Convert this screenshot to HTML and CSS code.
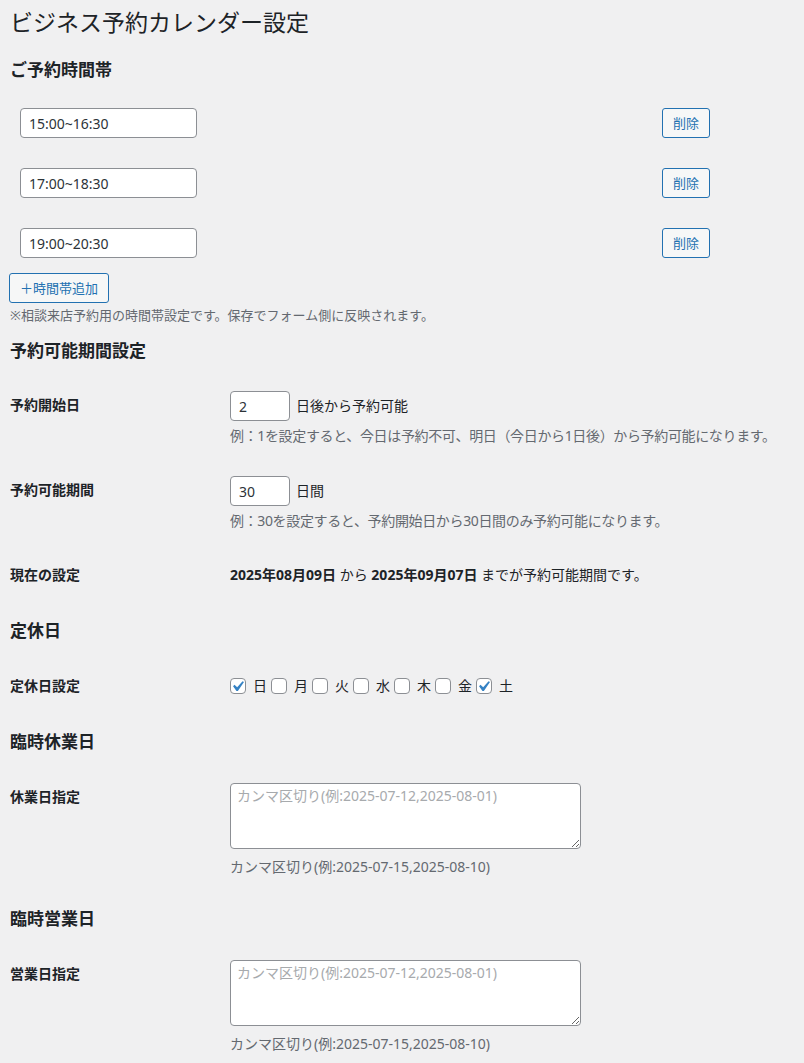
FILE: index.html
```html
<!DOCTYPE html>
<html lang="ja">
<head>
<meta charset="utf-8">
<title>ビジネス予約カレンダー設定</title>
<link rel="stylesheet" href="styles.css">
</head>
<body>
<div class="wrap">
  <h1 class="page-title">ビジネス予約カレンダー設定</h1>

  <h2 class="section first">ご予約時間帯</h2>
  <div class="slots">
    <div class="slot-row">
      <div class="slot-main"><input class="text-input slot-input" type="text" value="15:00~16:30"></div>
      <div class="slot-action"><button class="button" type="button">削除</button></div>
    </div>
    <div class="slot-row">
      <div class="slot-main"><input class="text-input slot-input" type="text" value="17:00~18:30"></div>
      <div class="slot-action"><button class="button" type="button">削除</button></div>
    </div>
    <div class="slot-row">
      <div class="slot-main"><input class="text-input slot-input" type="text" value="19:00~20:30"></div>
      <div class="slot-action"><button class="button" type="button">削除</button></div>
    </div>
  </div>
  <button class="button add-button" type="button">＋時間帯追加</button>
  <p class="note">※相談来店予約用の時間帯設定です。保存でフォーム側に反映されます。</p>

  <h2 class="section">予約可能期間設定</h2>
  <div class="form-table">
    <div class="form-row">
      <div class="th">予約開始日</div>
      <div class="td">
        <div class="inline"><input class="text-input small-input" type="text" value="2"><span>日後から予約可能</span></div>
        <p class="description">例：1を設定すると、今日は予約不可、明日（今日から1日後）から予約可能になります。</p>
      </div>
    </div>
    <div class="form-row">
      <div class="th">予約可能期間</div>
      <div class="td">
        <div class="inline"><input class="text-input small-input" type="text" value="30"><span>日間</span></div>
        <p class="description">例：30を設定すると、予約開始日から30日間のみ予約可能になります。</p>
      </div>
    </div>
    <div class="form-row">
      <div class="th">現在の設定</div>
      <div class="td td-text"><strong>2025年08月09日</strong> から <strong>2025年09月07日</strong> までが予約可能期間です。</div>
    </div>
  </div>

  <h2 class="section">定休日</h2>
  <div class="form-table">
    <div class="form-row">
      <div class="th">定休日設定</div>
      <div class="td td-text">
        <div class="days">
          <label class="day"><span class="cb checked"><svg viewBox="0 0 20 20" width="21" height="21"><path d="M14.83 4.89l1.34.94-5.81 8.38H9.02L5.78 9.67l1.34-1.25 2.570 2.4z" fill="#3582c4"/></svg></span>日</label>
          <label class="day"><span class="cb"></span>月</label>
          <label class="day"><span class="cb"></span>火</label>
          <label class="day"><span class="cb"></span>水</label>
          <label class="day"><span class="cb"></span>木</label>
          <label class="day"><span class="cb"></span>金</label>
          <label class="day"><span class="cb checked"><svg viewBox="0 0 20 20" width="21" height="21"><path d="M14.83 4.89l1.34.94-5.81 8.38H9.02L5.78 9.67l1.34-1.25 2.570 2.4z" fill="#3582c4"/></svg></span>土</label>
        </div>
      </div>
    </div>
  </div>

  <h2 class="section">臨時休業日</h2>
  <div class="form-table">
    <div class="form-row">
      <div class="th">休業日指定</div>
      <div class="td">
        <textarea class="textarea" placeholder="カンマ区切り(例:2025-07-12,2025-08-01)"></textarea>
        <p class="description tight">カンマ区切り(例:2025-07-15,2025-08-10)</p>
      </div>
    </div>
  </div>

  <h2 class="section">臨時営業日</h2>
  <div class="form-table">
    <div class="form-row">
      <div class="th">営業日指定</div>
      <div class="td">
        <textarea class="textarea" placeholder="カンマ区切り(例:2025-07-12,2025-08-01)"></textarea>
        <p class="description tight">カンマ区切り(例:2025-07-15,2025-08-10)</p>
      </div>
    </div>
  </div>
</div>
</body>
</html>
```

FILE: styles.css
```css
* { box-sizing: border-box; }

html, body {
  margin: 0;
  background: #f0f0f1;
}

body {
  font-family: "Noto Sans", "Noto Sans CJK JP", sans-serif;
  font-size: 14px;
  line-height: 1.4;
  color: #1d2327;
}

.wrap {
  padding: 0 10px;
}

.page-title {
  margin: 0;
  padding-top: 7px;
  font-size: 23px;
  font-weight: 400;
  line-height: 30px;
  color: #1d2327;
}

.section {
  margin: 15px 0 14px;
  font-size: 17px;
  font-weight: 700;
  line-height: 24px;
  color: #1d2327;
}

.section.first {
  margin-top: 21px;
  margin-bottom: 11px;
}

.slot-row {
  display: flex;
  align-items: center;
  padding: 15px 10px;
}

.slot-main {
  width: 632px;
}

.slot-action {
  padding-left: 10px;
}

.text-input {
  display: block;
  height: 30px;
  padding: 0 8px;
  border: 1px solid #8c8f94;
  border-radius: 4px;
  background: #fff;
  font-family: inherit;
  font-size: 14px;
  color: #2c3338;
  outline: none;
}

.slot-input {
  width: 177px;
}

.small-input {
  width: 60px;
}

.button {
  display: inline-block;
  height: 30px;
  padding: 0 10px;
  border: 1px solid #2271b1;
  border-radius: 3px;
  background: #f6f7f7;
  color: #2271b1;
  font-family: inherit;
  font-size: 13px;
  line-height: 28px;
  cursor: pointer;
}

.add-button {
  display: block;
  margin-left: -1px;
}

.note {
  margin: 4px 0 0;
  font-size: 13px;
  line-height: 16px;
  color: #646970;
}

.note + .section {
  margin-top: 16px;
  margin-bottom: 13px;
}

.form-row {
  display: flex;
  align-items: flex-start;
}

.th {
  width: 210px;
  flex: none;
  padding: 20px 10px 20px 0;
  font-weight: 700;
  line-height: 18px;
}

.td {
  flex: 1;
  min-width: 0;
  padding: 15px 10px;
  line-height: 18px;
}

.td-text {
  padding-top: 20px;
}

.inline {
  display: flex;
  align-items: center;
  gap: 6px;
}

.description {
  margin: 4px 0 0;
  line-height: 21px;
  color: #646970;
  white-space: nowrap;
  letter-spacing: -0.35px;
}

.description.tight {
  margin-top: 7px;
  letter-spacing: 0;
}

.days {
  display: flex;
  align-items: center;
}

.day {
  display: inline-flex;
  align-items: center;
  margin-right: 4px;
  line-height: 18px;
  color: #1d2327;
}

.cb {
  display: block;
  width: 16px;
  height: 16px;
  margin-right: 7px;
  border: 1px solid #8c8f94;
  border-radius: 4px;
  background: #fff;
  overflow: visible;
}

.cb svg {
  display: block;
  margin: -3px 0 0 -4px;
}

.textarea {
  display: block;
  width: 351px;
  height: 66px;
  padding: 2px 6px;
  border: 1px solid #8c8f94;
  border-radius: 4px;
  background: #fff;
  font-family: inherit;
  font-size: 14px;
  line-height: 20px;
  color: #2c3338;
  outline: none;
}

.textarea::placeholder {
  color: #a7aaad;
}
```
